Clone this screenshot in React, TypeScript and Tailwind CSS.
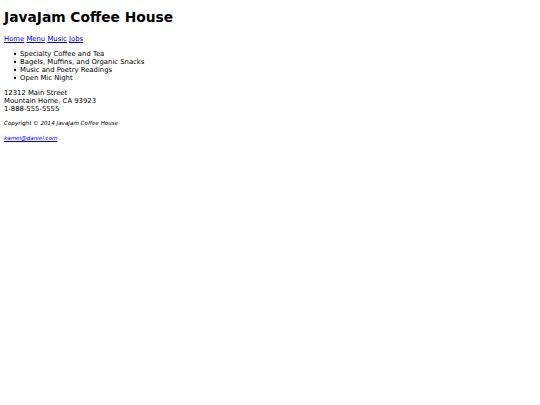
const items = [
  'Specialty Coffee and Tea',
  'Bagels, Muffins, and Organic Snacks',
  'Music and Poetry Readings',
  'Open Mic Night',
];

export default function App() {
  return (
    <div className="min-h-[405px] bg-white px-[4px] py-px text-[6.85px] leading-[8px] text-black font-['DejaVu_Sans',sans-serif]">
      <h1 className="mt-[8px] text-[13.8px] font-bold leading-[16px]">JavaJam Coffee House</h1>

      <nav className="mt-[10px]">
        <a href="#" className="text-[#0000ee] underline">Home</a>{' '}
        <a href="#" className="text-[#0000ee] underline">Menu</a>{' '}
        <a href="#" className="text-[#0000ee] underline">Music</a>{' '}
        <a href="#" className="text-[#0000ee] underline">Jobs</a>
      </nav>

      <ul className="mt-[7px] pl-[10px]">
        {items.map((item) => (
          <li key={item} className="flex items-center">
            <span className="mr-[4px] h-[2px] w-[2px] bg-black" />
            {item}
          </li>
        ))}
      </ul>

      <div className="mt-[7px]">
        12312 Main Street<br />
        Mountain Home, CA 93923<br />
        1-888-555-5555
      </div>

      <footer className="mt-[6px] text-[5.6px] leading-[8px] italic">
        <p>Copyright © 2014 JavaJam Coffee House</p>
        <p className="mt-[7px]">
          <a href="#" className="text-[#0000ee] underline">kamei@daniel.com</a>
        </p>
      </footer>
    </div>
  );
}
